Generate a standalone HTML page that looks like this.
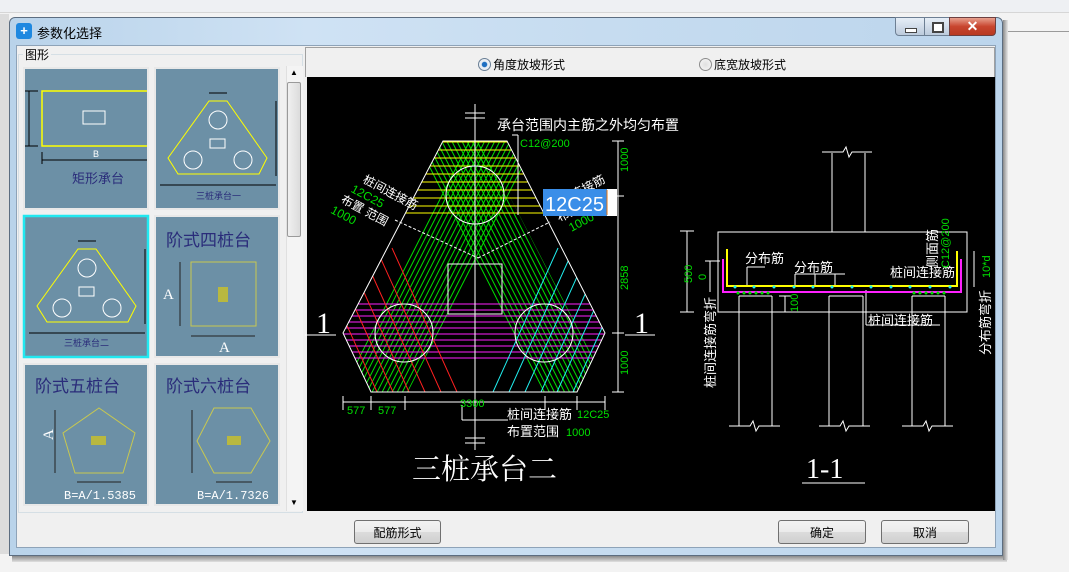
<!DOCTYPE html>
<html><head><meta charset="utf-8"><style>
html,body{margin:0;padding:0;width:1069px;height:572px;overflow:hidden;background:#f3f3f3;font-family:"Liberation Sans","Noto Sans CJK SC",sans-serif;}
.a{position:absolute}
.btn{position:absolute;height:24px;border:1px solid #707070;border-radius:3px;background:linear-gradient(#f2f2f2,#ebebeb 50%,#dcdcdc 50%,#cfcfcf);font-size:12px;text-align:center;line-height:24px;color:#000;box-sizing:border-box}
</style></head><body>
<div class="a" style="left:0;top:0;width:1069px;height:12px;background:#eef0f3;border-bottom:1px solid #d6d6d6"></div>
<div class="a" style="left:1005px;top:31px;width:64px;height:1px;background:#9a9a9a"></div>
<div class="a" style="left:0;top:14px;width:9px;height:540px;background:#dcdcdc"></div>
<div class="a" style="left:12px;top:556px;width:995px;height:6px;background:linear-gradient(#8a8a8a,#e0e0e0)"></div>
<div class="a" style="left:1003px;top:20px;width:5px;height:540px;background:linear-gradient(90deg,#8a8a8a,#e8e8e8)"></div>
<!-- dialog frame -->
<div class="a" style="left:9px;top:17px;width:994px;height:539px;background:linear-gradient(90deg,#b9d3ea,#cfe2f4 30%,#c6dcf0 60%,#bcd5ec);border:1px solid #5c6d80;border-radius:6px 6px 0 0;box-sizing:border-box"></div>
<div class="a" style="left:16px;top:45px;width:980px;height:503px;background:#f0f0f0;border:1px solid #8ea3b8;box-sizing:border-box"></div>
<!-- title -->
<div class="a" style="left:16px;top:23px;width:16px;height:16px;background:#1e88e0;border-radius:3px;color:#fff;font-size:13px;line-height:16px;text-align:center;font-weight:bold">+</div>
<div class="a" style="left:37px;top:23px;font-size:13px;color:#000">参数化选择</div>
<div class="a" style="left:895px;top:17px;width:30px;height:19px;background:linear-gradient(#e6eef7,#bccbdc);border:1px solid #6d7f93;border-radius:0 0 0 4px;box-sizing:border-box"><div class="a" style="left:9px;top:10px;width:10px;height:3px;background:#fff;border:1px solid #444"></div></div>
<div class="a" style="left:924px;top:17px;width:26px;height:19px;background:linear-gradient(#e6eef7,#bccbdc);border:1px solid #6d7f93;box-sizing:border-box"><div class="a" style="left:7px;top:4px;width:8px;height:7px;border:2px solid #444;background:#fff"></div></div>
<div class="a" style="left:949px;top:17px;width:47px;height:19px;background:linear-gradient(#e8a08e,#c8452f 50%,#b83a22);border:1px solid #6d4040;border-radius:0 0 4px 0;box-sizing:border-box;color:#fff;font-weight:bold;font-size:14px;text-align:center;line-height:17px">✕</div>
<!-- left group -->
<div class="a" style="left:18px;top:54px;width:285px;height:459px;border:1px solid #d5dfe5;box-sizing:border-box"></div>
<div class="a" style="left:23px;top:46px;font-size:12px;background:#f0f0f0;padding:0 2px">图形</div>
<div class="a" style="left:286px;top:66px;width:16px;height:445px;background:#f4f4f4;border-left:1px solid #e0e0e0"></div>
<div class="a" style="left:287px;top:82px;width:14px;height:155px;background:linear-gradient(90deg,#f0f0f0,#dcdcdc);border:1px solid #9a9a9a;border-radius:2px;box-sizing:border-box"></div>
<div class="a" style="left:290px;top:68px;font-size:8px">▲</div>
<div class="a" style="left:290px;top:498px;font-size:8px">▼</div>
<!-- radio bar -->
<div class="a" style="left:305px;top:47px;width:690px;height:30px;border:1px solid #a0a0a0;border-bottom:none;box-sizing:border-box"></div>
<div class="a" style="left:478px;top:58px;width:11px;height:11px;border-radius:50%;border:1px solid #6a7f95;background:radial-gradient(#1d6fc2 30%,#e8eef4 40%)"></div>
<div class="a" style="left:493px;top:56px;font-size:12px">角度放坡形式</div>
<div class="a" style="left:699px;top:58px;width:11px;height:11px;border-radius:50%;border:1px solid #8c8c8c;background:radial-gradient(#e0e0e0,#f8f8f8)"></div>
<div class="a" style="left:714px;top:56px;font-size:12px">底宽放坡形式</div>
<!-- buttons -->
<div class="btn" style="left:354px;top:520px;width:87px">配筋形式</div>
<div class="btn" style="left:778px;top:520px;width:88px">确定</div>
<div class="btn" style="left:881px;top:520px;width:88px">取消</div>

<svg class="a" style="left:0;top:0" width="1069" height="572" viewBox="0 0 1069 572" font-family="Liberation Sans, Noto Sans CJK SC, sans-serif">
<defs>
<clipPath id="hx"><polygon points="443,141 507,141 605,333 577,392 371,392 343,333"/></clipPath>
<pattern id="gl" width="4.5" height="10" patternUnits="userSpaceOnUse" patternTransform="rotate(27)"><line x1="1" y1="0" x2="1" y2="10" stroke="#00e000" stroke-width="1"/></pattern>
<pattern id="gr" width="4.5" height="10" patternUnits="userSpaceOnUse" patternTransform="rotate(-27)"><line x1="1" y1="0" x2="1" y2="10" stroke="#00e000" stroke-width="1"/></pattern>
</defs>
<!-- thumbnails frames -->
<g fill="#6c90a6" stroke="#e8e8e8" stroke-width="2">
<rect x="24" y="68" width="124" height="141"/><rect x="155" y="68" width="124" height="141"/>
<rect x="155" y="216" width="124" height="141"/>
<rect x="24" y="364" width="124" height="141"/><rect x="155" y="364" width="124" height="141"/>
</g>
<rect x="24" y="216" width="124" height="141" fill="#6c90a6" stroke="#22e8f0" stroke-width="2.5"/>
<!-- thumb1 -->
<g stroke="#000" fill="none"><line x1="29" y1="91" x2="29" y2="146"/><line x1="25" y1="91" x2="38" y2="91"/><line x1="25" y1="146" x2="38" y2="146"/><line x1="42" y1="160" x2="147" y2="160"/><line x1="42" y1="152" x2="42" y2="164"/></g>
<polyline points="147,91 42,91 42,146 147,146" fill="none" stroke="#ffff00" stroke-width="1.5"/>
<rect x="83" y="111" width="22" height="13" fill="none" stroke="#fff"/>
<text x="93" y="157" font-size="9" fill="#fff">B</text>
<text x="72" y="183" font-size="13" fill="#2a2c7a">矩形承台</text>
<!-- thumb2 & 3 triangles -->
<g id="tri">
<polygon points="209,101 227,101 267,158 259,174 178,174 168,158" fill="none" stroke="#ffff00"/>
<circle cx="218" cy="120" r="9" fill="none" stroke="#fff"/><circle cx="193" cy="160" r="9" fill="none" stroke="#fff"/><circle cx="243" cy="160" r="9" fill="none" stroke="#fff"/>
<rect x="210" y="139" width="15" height="9" fill="none" stroke="#fff"/>
<g stroke="#000"><line x1="160" y1="185" x2="276" y2="185"/><line x1="276" y1="101" x2="276" y2="176"/><line x1="209" y1="93" x2="227" y2="93"/></g>
</g>
<text x="196" y="199" font-size="9" fill="#2a2c7a">三桩承台一</text>
<g transform="translate(-131,148)">
<polygon points="209,101 227,101 267,158 259,174 178,174 168,158" fill="none" stroke="#ffff00"/>
<circle cx="218" cy="120" r="9" fill="none" stroke="#fff"/><circle cx="193" cy="160" r="9" fill="none" stroke="#fff"/><circle cx="243" cy="160" r="9" fill="none" stroke="#fff"/>
<rect x="210" y="139" width="15" height="9" fill="none" stroke="#fff"/>
<g stroke="#000"><line x1="160" y1="185" x2="276" y2="185"/><line x1="276" y1="101" x2="276" y2="176"/><line x1="209" y1="93" x2="227" y2="93"/></g>
</g>
<text x="64" y="346" font-size="9" fill="#2a2c7a">三桩承台二</text>
<!-- thumb4 -->
<text x="166" y="246" font-size="17" fill="#2a2c7a">阶式四桩台</text>
<rect x="191" y="262" width="65" height="64" fill="none" stroke="#c8c850"/>
<rect x="218" y="287" width="10" height="15" fill="#b8b840"/>
<line x1="180" y1="262" x2="180" y2="326" stroke="#222"/><line x1="191" y1="336" x2="255" y2="336" stroke="#222"/>
<text x="163" y="299" font-size="15" fill="#fff" font-family="Liberation Serif">A</text>
<text x="219" y="352" font-size="15" fill="#fff" font-family="Liberation Serif">A</text>
<!-- thumb5 -->
<text x="35" y="392" font-size="17" fill="#2a2c7a">阶式五桩台</text>
<polygon points="99,408 135,433 123,473 75,473 63,433" fill="none" stroke="#c8c850"/>
<rect x="91" y="436" width="15" height="9" fill="#b8b840"/>
<line x1="55" y1="410" x2="55" y2="473" stroke="#222"/><line x1="77" y1="482" x2="121" y2="482" stroke="#222"/>
<text x="64" y="499" font-size="12" fill="#fff" font-family="Liberation Mono">B=A/1.5385</text>
<text x="48" y="445" font-size="15" fill="#fff" font-family="Liberation Serif" transform="rotate(-90 48 440)">A</text>
<!-- thumb6 -->
<text x="166" y="392" font-size="17" fill="#2a2c7a">阶式六桩台</text>
<polygon points="214,408 251,408 270,441 251,473 214,473 197,441" fill="none" stroke="#c8c850"/>
<rect x="227" y="436" width="14" height="9" fill="#b8b840"/>
<line x1="192" y1="410" x2="192" y2="473" stroke="#222"/><line x1="216" y1="482" x2="252" y2="482" stroke="#222"/>
<text x="197" y="499" font-size="12" fill="#fff" font-family="Liberation Mono">B=A/1.7326</text>

<!-- canvas -->
<rect x="307" y="77" width="688" height="434" fill="#000"/>
<g clip-path="url(#hx)">
<polygon points="476,127 530,155 398,411 344,383" fill="url(#gl)"/>
<polygon points="474,127 420,155 552,411 606,383" fill="url(#gr)"/>
<g stroke="#ffff00"><line x1="430" y1="142" x2="520" y2="142"/><line x1="420" y1="150" x2="530" y2="150"/><line x1="420" y1="158" x2="530" y2="158"/><line x1="420" y1="166" x2="530" y2="166"/><line x1="410" y1="174" x2="540" y2="174"/><line x1="410" y1="182" x2="540" y2="182"/><line x1="400" y1="190" x2="550" y2="190"/><line x1="400" y1="198" x2="550" y2="198"/><line x1="400" y1="206" x2="550" y2="206"/><line x1="390" y1="213" x2="560" y2="213"/></g>
<g stroke="#ff20ff"><line x1="340" y1="304" x2="610" y2="304"/><line x1="340" y1="310" x2="610" y2="310"/><line x1="340" y1="316" x2="610" y2="316"/><line x1="340" y1="322" x2="610" y2="322"/><line x1="340" y1="328" x2="610" y2="328"/><line x1="340" y1="334" x2="610" y2="334"/><line x1="340" y1="340" x2="610" y2="340"/><line x1="340" y1="346" x2="610" y2="346"/><line x1="340" y1="352" x2="610" y2="352"/><line x1="340" y1="358" x2="610" y2="358"/></g>
<g stroke="#ff2020"><line x1="392" y1="248" x2="457" y2="392"/><line x1="376" y1="248" x2="441" y2="392"/><line x1="360" y1="248" x2="425" y2="392"/><line x1="344" y1="248" x2="409" y2="392"/><line x1="328" y1="248" x2="393" y2="392"/><line x1="312" y1="248" x2="377" y2="392"/></g>
<g stroke="#20f0f0"><line x1="558" y1="248" x2="493" y2="392"/><line x1="574" y1="248" x2="509" y2="392"/><line x1="590" y1="248" x2="525" y2="392"/><line x1="606" y1="248" x2="541" y2="392"/><line x1="622" y1="248" x2="557" y2="392"/><line x1="638" y1="248" x2="573" y2="392"/></g>
</g>
<polygon points="443,141 507,141 605,333 577,392 371,392 343,333" fill="none" stroke="#fff"/>
<g fill="none" stroke="#fff"><circle cx="475" cy="195" r="29"/><circle cx="404" cy="333" r="29"/><circle cx="544" cy="333" r="29"/>
<rect x="448" y="264" width="54" height="50"/>
<line x1="475" y1="104" x2="475" y2="450"/><line x1="465" y1="113" x2="485" y2="113"/><line x1="465" y1="118" x2="485" y2="118"/><line x1="465" y1="438" x2="485" y2="438"/><line x1="465" y1="443" x2="485" y2="443"/>
<line x1="395" y1="220" x2="478" y2="258" stroke-dasharray="3 2"/><line x1="478" y1="258" x2="550" y2="222" stroke-dasharray="3 2"/>
<line x1="512" y1="135" x2="518" y2="135"/><line x1="518" y1="135" x2="518" y2="215"/>
<line x1="305" y1="335" x2="336" y2="335"/><line x1="625" y1="335" x2="655" y2="335"/>
<line x1="462" y1="405" x2="462" y2="420"/><line x1="462" y1="420" x2="508" y2="420"/>
<line x1="343" y1="402" x2="605" y2="402"/><line x1="343" y1="396" x2="343" y2="410"/><line x1="371" y1="396" x2="371" y2="410"/><line x1="405" y1="396" x2="405" y2="410"/><line x1="545" y1="396" x2="545" y2="410"/><line x1="577" y1="396" x2="577" y2="410"/><line x1="605" y1="396" x2="605" y2="410"/>
<line x1="618" y1="141" x2="618" y2="392"/><line x1="612" y1="141" x2="624" y2="141"/><line x1="612" y1="196" x2="624" y2="196"/><line x1="612" y1="333" x2="624" y2="333"/><line x1="612" y1="392" x2="624" y2="392"/>
</g>
<text x="497" y="130" font-size="14" fill="#fff">承台范围内主筋之外均匀布置</text>
<text x="520" y="147" font-size="11" fill="#00e000">C12@200</text>
<text x="316" y="333" font-size="30" fill="#fff" font-family="Liberation Serif">1</text>
<text x="634" y="333" font-size="30" fill="#fff" font-family="Liberation Serif">1</text>
<g font-size="11" fill="#00e000">
<text transform="translate(628,172) rotate(-90)">1000</text>
<text transform="translate(628,290) rotate(-90)">2858</text>
<text transform="translate(628,375) rotate(-90)">1000</text>
<text x="347" y="414">577</text><text x="378" y="414">577</text><text x="460" y="407">3300</text>
<text x="577" y="418">12C25</text><text x="566" y="436">1000</text>
</g>
<text x="507" y="419" font-size="13" fill="#fff">桩间连接筋</text>
<text x="507" y="436" font-size="13" fill="#fff">布置范围</text>
<g transform="translate(362,182) rotate(28)"><text font-size="12" fill="#fff">桩间连接筋</text><text x="-6" y="14" font-size="12" fill="#00e000">12C25</text><text x="-10" y="28" font-size="12" fill="#fff">布置 范围</text><text x="-14" y="42" font-size="12" fill="#00e000">1000</text></g>
<g transform="translate(553,210) rotate(-28)"><text font-size="12" fill="#fff">桩间连接筋</text><text x="0" y="14" font-size="12" fill="#fff">布置 范围</text><text x="6" y="28" font-size="12" fill="#00e000">1000</text></g>
<rect x="543" y="189" width="64" height="27" fill="#3a8ee8"/><rect x="607" y="189" width="10" height="27" fill="#fff"/><line x1="607" y1="190" x2="607" y2="215" stroke="#e07010"/>
<text x="545" y="211" font-size="20" fill="#fff">12C25</text>
<text x="412" y="479" font-size="29" fill="#fff" font-family="Liberation Serif, Noto Serif CJK SC, serif">三桩承台二</text>
<!-- section 1-1 -->
<g fill="none" stroke="#fff">
<line x1="832" y1="153" x2="832" y2="232"/><line x1="865" y1="153" x2="865" y2="232"/><polyline points="822,152 843,152 846,147 849,157 852,152 872,152"/>
<rect x="718" y="232" width="249" height="80"/>
<line x1="739" y1="296" x2="739" y2="426"/><line x1="772" y1="296" x2="772" y2="426"/><line x1="739" y1="296" x2="772" y2="296"/>
<line x1="829" y1="296" x2="829" y2="426"/><line x1="863" y1="296" x2="863" y2="426"/><line x1="829" y1="296" x2="863" y2="296"/>
<line x1="912" y1="296" x2="912" y2="426"/><line x1="945" y1="296" x2="945" y2="426"/><line x1="912" y1="296" x2="945" y2="296"/>
<polyline points="729,426 750,426 753,421 756,431 759,426 780,426"/><polyline points="819,426 840,426 843,421 846,431 849,426 870,426"/><polyline points="902,426 923,426 926,421 929,431 932,426 953,426"/>
<line x1="687" y1="231" x2="687" y2="312"/><line x1="680" y1="231" x2="694" y2="231"/><line x1="680" y1="312" x2="694" y2="312"/>
<line x1="710" y1="261" x2="710" y2="292"/><line x1="705" y1="261" x2="720" y2="261"/>
<line x1="785" y1="296" x2="785" y2="312"/><line x1="779" y1="296" x2="791" y2="296"/>
<line x1="974" y1="251" x2="974" y2="287"/>
<line x1="747" y1="267" x2="747" y2="285"/><line x1="747" y1="267" x2="765" y2="267"/>
<line x1="795" y1="274" x2="845" y2="274"/><line x1="795" y1="274" x2="795" y2="285"/><line x1="815" y1="274" x2="815" y2="285"/><line x1="835" y1="274" x2="835" y2="285"/>
<line x1="866" y1="290" x2="866" y2="325"/><line x1="866" y1="325" x2="940" y2="325"/>
<line x1="802" y1="483" x2="865" y2="483"/>
</g>
<polyline points="727,249 727,286 957,286 957,251" fill="none" stroke="#ffff00" stroke-width="2"/>
<polyline points="723,259 723,292 961,292 961,259" fill="none" stroke="#ff20ff" stroke-width="2"/>
<g fill="#20f0f0"><circle cx="735" cy="287" r="1.5"/><circle cx="754" cy="287" r="1.5"/><circle cx="774" cy="287" r="1.5"/><circle cx="794" cy="287" r="1.5"/><circle cx="813" cy="287" r="1.5"/><circle cx="832" cy="287" r="1.5"/><circle cx="852" cy="287" r="1.5"/><circle cx="871" cy="287" r="1.5"/><circle cx="891" cy="287" r="1.5"/><circle cx="910" cy="287" r="1.5"/><circle cx="930" cy="287" r="1.5"/><circle cx="950" cy="287" r="1.5"/></g>
<g fill="#00e000"><circle cx="738" cy="293" r="1.5"/><circle cx="744" cy="293" r="1.5"/><circle cx="750" cy="293" r="1.5"/><circle cx="756" cy="293" r="1.5"/><circle cx="762" cy="293" r="1.5"/><circle cx="768" cy="293" r="1.5"/><circle cx="914" cy="293" r="1.5"/><circle cx="920" cy="293" r="1.5"/><circle cx="926" cy="293" r="1.5"/><circle cx="932" cy="293" r="1.5"/><circle cx="938" cy="293" r="1.5"/><circle cx="944" cy="293" r="1.5"/></g>
<g font-size="13" fill="#fff">
<text x="745" y="263">分布筋</text><text x="794" y="272">分布筋</text><text x="890" y="277">桩间连接筋</text><text x="868" y="325">桩间连接筋</text>
<text transform="translate(715,388) rotate(-90)">桩间连接筋弯折</text>
<text transform="translate(990,355) rotate(-90)">分布筋弯折</text>
<text transform="translate(937,268) rotate(-90)">侧面筋</text>
</g>
<g font-size="11" fill="#00e000">
<text transform="translate(692,283) rotate(-90)">500</text><text transform="translate(706,280) rotate(-90)">0</text>
<text transform="translate(798,312) rotate(-90)">100</text><text transform="translate(990,278) rotate(-90)">10*d</text>
<text transform="translate(949,268) rotate(-90)">C12@200</text>
</g>
<text x="806" y="478" font-size="28" fill="#fff" font-family="Liberation Serif">1-1</text>
</svg>
</body></html>
